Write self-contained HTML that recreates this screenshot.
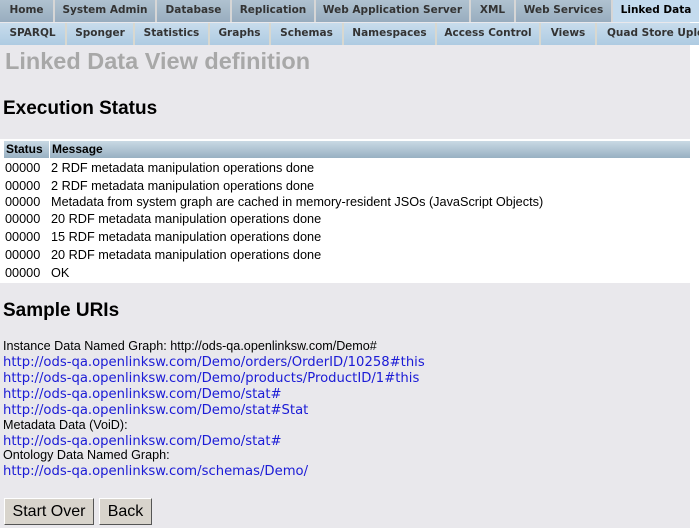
<!DOCTYPE html>
<html><head><meta charset="utf-8"><style>
*{margin:0;padding:0;box-sizing:border-box}
body{width:699px;height:528px;background:#fff;overflow:hidden;position:relative;font-family:"Liberation Sans",sans-serif;font-size:12px}
#pg{position:absolute;left:0;top:0;width:690px;height:528px;background:#e9e8ec}
.tab{position:absolute;height:22px;line-height:21px;text-align:center;font-family:"DejaVu Sans",sans-serif;font-weight:bold;font-size:10.5px;color:#333;border-right:2px solid #d6d6d6;white-space:nowrap;overflow:hidden}
.r1{top:0;background:linear-gradient(#b0c2d0,#98adbf)}
.r2{top:23px;background:linear-gradient(#c8dcec,#aecbe2);border-right:2px solid #d8d8d0}
.act{background:#c4dbee;color:#000}
h1{position:absolute;left:5px;top:48px;font-size:23.5px;color:#a8a8a8;font-weight:bold;white-space:nowrap}
h2{position:absolute;left:3px;font-size:19px;color:#000;font-weight:bold;white-space:nowrap}
#tbl{position:absolute;left:0;top:139px;width:690px;height:144px;background:#fff}
.th{position:absolute;top:2px;height:17px;line-height:17px;background:linear-gradient(#c9d9e4,#98b0c2);font-weight:bold;font-size:12px;padding-left:2px}
.row{position:absolute;left:5px;font-size:12.7px;color:#000;white-space:nowrap;width:680px}
.row span{position:absolute;left:46px;white-space:nowrap}
.ln{position:absolute;left:3px;font-family:"DejaVu Sans",sans-serif;font-size:13.2px;color:#1b1bd6;white-space:nowrap}
.tx{position:absolute;left:3px;font-size:12.6px;white-space:nowrap}
.btn{position:absolute;top:498px;height:27px;background:#d8d4cc;border:1px solid #fff;border-right-color:#555;border-bottom-color:#555;font-size:16px;line-height:25px;text-align:center}
</style></head><body><div id="pg">
<div class="tab r1" style="left:0;width:55px">Home</div>
<div class="tab r1" style="left:55px;width:102px">System Admin</div>
<div class="tab r1" style="left:157px;width:75px">Database</div>
<div class="tab r1" style="left:232px;width:84px">Replication</div>
<div class="tab r1" style="left:316px;width:155px">Web Application Server</div>
<div class="tab r1" style="left:471px;width:45px">XML</div>
<div class="tab r1" style="left:516px;width:97px">Web Services</div>
<div class="tab r1 act" style="left:613px;width:86px;border:0">Linked Data</div>
<div class="tab r2" style="left:0;width:67px">SPARQL</div>
<div class="tab r2" style="left:67px;width:68px">Sponger</div>
<div class="tab r2" style="left:135px;width:75px">Statistics</div>
<div class="tab r2" style="left:210px;width:61px">Graphs</div>
<div class="tab r2" style="left:271px;width:73px">Schemas</div>
<div class="tab r2" style="left:344px;width:93px">Namespaces</div>
<div class="tab r2" style="left:437px;width:104px">Access Control</div>
<div class="tab r2" style="left:541px;width:56px">Views</div>
<div class="tab r2" style="left:597px;width:102px;text-align:left;padding-left:10px;border:0">Quad Store Upload</div>
<h1>Linked Data View definition</h1>
<h2 style="top:98px">Execution Status</h2>
<div id="tbl">
<div class="th" style="left:4px;width:45px">Status</div>
<div class="th" style="left:50px;width:640px">Message</div>
<div class="row" style="top:22px">00000<span>2 RDF metadata manipulation operations done</span></div>
<div class="row" style="top:40px">00000<span>2 RDF metadata manipulation operations done</span></div>
<div class="row" style="top:56px">00000<span>Metadata from system graph are cached in memory-resident JSOs (JavaScript Objects)</span></div>
<div class="row" style="top:73px">00000<span>20 RDF metadata manipulation operations done</span></div>
<div class="row" style="top:91px">00000<span>15 RDF metadata manipulation operations done</span></div>
<div class="row" style="top:109px">00000<span>20 RDF metadata manipulation operations done</span></div>
<div class="row" style="top:127px">00000<span>OK</span></div>
</div>
<h2 style="top:300px">Sample URIs</h2>
<div class="tx" style="top:339px">Instance Data Named Graph: http://ods-qa.openlinksw.com/Demo#</div>
<div class="ln" style="top:355px">http://ods-qa.openlinksw.com/Demo/orders/OrderID/10258#this</div>
<div class="ln" style="top:371px">http://ods-qa.openlinksw.com/Demo/products/ProductID/1#this</div>
<div class="ln" style="top:387px">http://ods-qa.openlinksw.com/Demo/stat#</div>
<div class="ln" style="top:403px">http://ods-qa.openlinksw.com/Demo/stat#Stat</div>
<div class="tx" style="top:418px">Metadata Data (VoiD):</div>
<div class="ln" style="top:434px">http://ods-qa.openlinksw.com/Demo/stat#</div>
<div class="tx" style="top:448px">Ontology Data Named Graph:</div>
<div class="ln" style="top:464px">http://ods-qa.openlinksw.com/schemas/Demo/</div>
<div class="btn" style="left:4px;width:90px">Start Over</div>
<div class="btn" style="left:99px;width:53px">Back</div>
</div></body></html>
